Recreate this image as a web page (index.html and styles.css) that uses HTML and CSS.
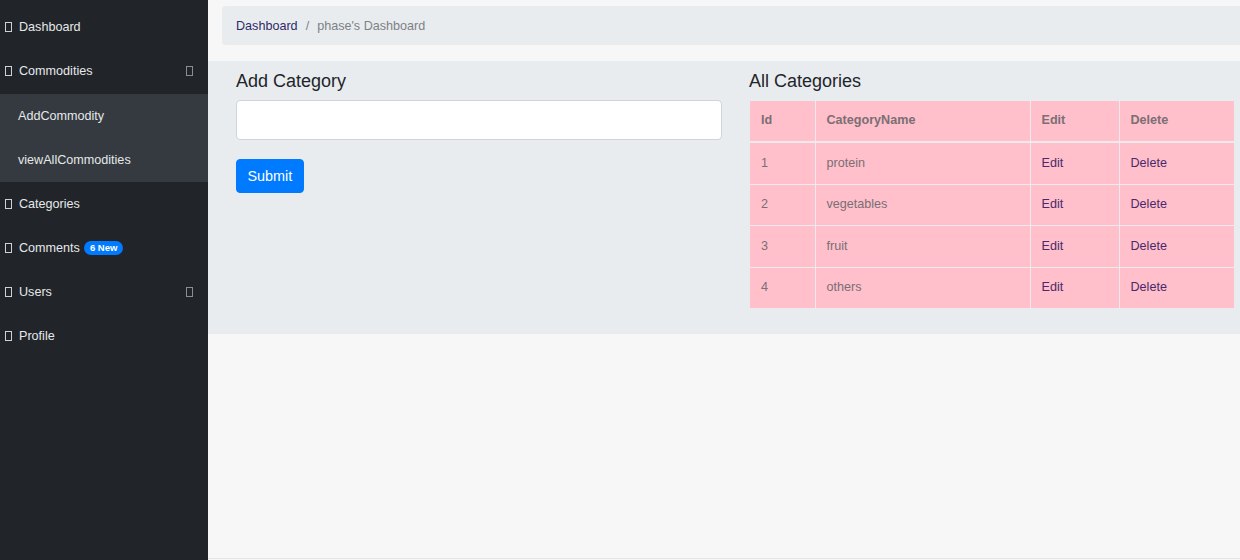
FILE: index.html
```html
<!DOCTYPE html>
<html>
<head>
<meta charset="utf-8">
<link rel="stylesheet" href="styles.css">
</head>
<body>
<div class="app">
  <nav class="sidebar">
    <a class="nav-item"><span class="tofu"></span><span>Dashboard</span></a>
    <a class="nav-item"><span class="tofu"></span><span>Commodities</span><span class="tofu chev"></span></a>
    <div class="submenu">
      <a class="sub-item">AddCommodity</a>
      <a class="sub-item">viewAllCommodities</a>
    </div>
    <a class="nav-item"><span class="tofu"></span><span>Categories</span></a>
    <a class="nav-item"><span class="tofu"></span><span>Comments</span><span class="badge">6 New</span></a>
    <a class="nav-item"><span class="tofu"></span><span>Users</span><span class="tofu chev"></span></a>
    <a class="nav-item"><span class="tofu"></span><span>Profile</span></a>
  </nav>
  <main class="main">
    <div class="crumb-wrap">
      <ol class="breadcrumb">
        <li class="crumb-link">Dashboard</li>
        <li class="crumb-sep">/</li>
        <li class="crumb-active">phase's Dashboard</li>
      </ol>
    </div>
    <section class="band">
      <div class="col">
        <h4 class="title">Add Category</h4>
        <input class="field" type="text">
        <button class="btn">Submit</button>
      </div>
      <div class="col">
        <h4 class="title">All Categories</h4>
        <table class="tbl">
          <thead>
            <tr><th class="c-id">Id</th><th class="c-name">CategoryName</th><th class="c-edit">Edit</th><th class="c-del">Delete</th></tr>
          </thead>
          <tbody>
            <tr><td>1</td><td>protein</td><td class="lnk">Edit</td><td class="lnk">Delete</td></tr>
            <tr><td>2</td><td>vegetables</td><td class="lnk">Edit</td><td class="lnk">Delete</td></tr>
            <tr><td>3</td><td>fruit</td><td class="lnk">Edit</td><td class="lnk">Delete</td></tr>
            <tr><td>4</td><td>others</td><td class="lnk">Edit</td><td class="lnk">Delete</td></tr>
          </tbody>
        </table>
      </div>
    </section>
    <div class="spacer"></div>
    <div class="foot"></div>
  </main>
</div>
</body>
</html>
```
FILE: styles.css
```css
* { box-sizing: border-box; }
html, body { margin: 0; padding: 0; }
body {
  font-family: "Liberation Sans", Arial, sans-serif;
  font-size: 12.6px;
  width: 1240px;
  height: 560px;
  overflow: hidden;
  background: #f7f7f7;
}
.app { display: flex; height: 560px; }
.sidebar {
  width: 208px;
  flex: none;
  background: #212529;
  padding-top: 5px;
  display: flex;
  flex-direction: column;
}
.nav-item {
  height: 44px;
  display: flex;
  align-items: center;
  padding-left: 5px;
  padding-right: 15px;
  color: #e6e8ea;
  font-size: 12.6px;
}
.tofu {
  width: 7px;
  height: 10px;
  border: 1px solid #cfd2d5;
  margin-right: 7px;
  flex: none;
}
.chev { margin-left: auto; margin-right: 0; border-color: #8a8e93; }
.badge {
  margin-left: 4px;
  background: #007bff;
  color: #fff;
  font-weight: bold;
  font-size: 9.5px;
  line-height: 14px;
  height: 14px;
  padding: 0 6px;
  border-radius: 8px;
}
.submenu { background: #343a40; margin-top: 1px; }
.sub-item {
  display: flex;
  align-items: center;
  height: 44px;
  padding-left: 18px;
  color: #e6e8ea;
}
.main {
  flex: 1;
  min-width: 0;
  overflow: hidden;
  display: flex;
  flex-direction: column;
}
.crumb-wrap { padding: 6px 0 0 14px; }
.breadcrumb {
  margin: 0;
  list-style: none;
  width: 1026px;
  height: 39px;
  padding: 0 14px;
  background: #e9ecef;
  border-radius: 4px;
  display: flex;
  align-items: center;
  gap: 8px;
}
.crumb-link { color: #2f2a66; }
.crumb-sep, .crumb-active { color: #7d8186; }
.band {
  margin-top: 16px;
  background: #e9ecef;
  padding: 10px 0 26px 14px;
  display: flex;
  width: 1054px;
}
.col { width: 513px; padding: 0 14px; flex: none; }
.title {
  margin: 0 0 7px 0;
  font-size: 18px;
  font-weight: normal;
  line-height: 21.6px;
  color: #212529;
}
.field {
  display: block;
  width: 486px;
  height: 40px;
  background: #fff;
  border: 1px solid #ced4da;
  border-radius: 4px;
  margin: 0 0 19px 0;
}
.btn {
  display: block;
  font-family: "Liberation Sans", Arial, sans-serif;
  font-size: 14.4px;
  height: 34px;
  padding: 0 10.5px;
  background: #007bff;
  color: #fff;
  border: 1px solid #007bff;
  border-radius: 4px;
}
.tbl {
  margin-top: 8px;
  margin-left: 1px;
  width: 484px;
  border-collapse: collapse;
  background: #ffc0cb;
  table-layout: fixed;
}
.tbl th, .tbl td {
  text-align: left;
  padding: 10.8px 11px;
  line-height: 18.9px;
  border: 1px solid #f1eaec;
  color: #7b6e74;
}
.tbl th { font-weight: bold; border-bottom: 2px solid #f1eaec; }
.tbl tr > :first-child { border-left: none; }
.tbl tr > :last-child { border-right: none; }
.tbl thead th { border-top: none; }
.tbl tbody tr:last-child td { border-bottom: none; }
.c-id { width: 65px; }
.c-name { width: 215px; }
.c-edit { width: 89px; }
.c-del { width: 115px; }
.tbl td.lnk { color: #4a2a6a; }
.spacer { flex: 1; }
.foot { height: 2px; border-top: 1px solid #e4e4e4; }
```
